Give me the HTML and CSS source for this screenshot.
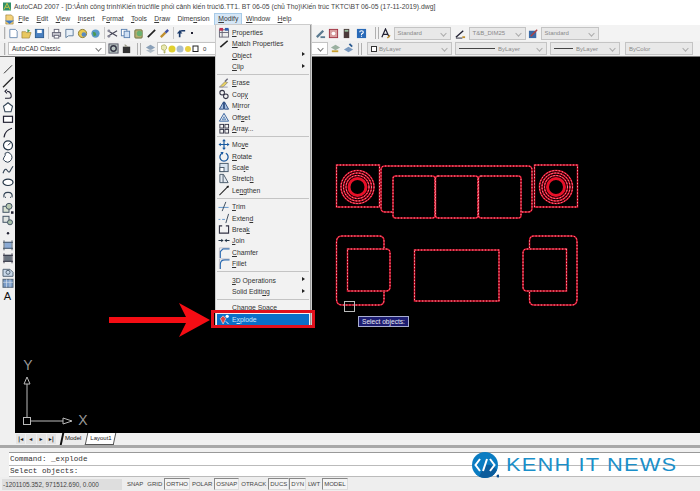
FILE: index.html
```html
<!DOCTYPE html>
<html lang="en">
<head>
    <meta charset="UTF-8">
    <meta name="viewport" content="width=device-width, initial-scale=1.0">
    <title>AutoCAD 2007</title>
    <link rel="stylesheet" href="styles.css">
</head>
<body>
<div class="app">
    <div class="titlebar">
        <svg class="app-icon" viewBox="0 0 10 10"><rect width="10" height="10" fill="#2f8f6a"/><path d="M1 9 5 1l4 8M3 6h4" stroke="#e8d040" fill="none"/></svg>
        <span>AutoCAD 2007 - [D:\Ảnh công trình\Kiến trúc\file phối cảnh kiến trúc\6.TT1. BT 06-05 (chủ Thọ)\Kiến trúc TKTC\BT 06-05 (17-11-2019).dwg]</span>
    </div>

    <div class="menubar">
        <svg class="doc-icon" viewBox="0 0 12 12"><path d="M2 1h6l2 2v8H2z" fill="#f4d27a" stroke="#8a6a20" stroke-width=".6"/><path d="M1 7l5 4 5-4" fill="#3a78c8"/></svg>
        <a><u>F</u>ile</a>
        <a><u>E</u>dit</a>
        <a><u>V</u>iew</a>
        <a><u>I</u>nsert</a>
        <a>F<u>o</u>rmat</a>
        <a><u>T</u>ools</a>
        <a><u>D</u>raw</a>
        <a>Dime<u>n</u>sion</a>
        <a class="active"><u>M</u>odify</a>
        <a><u>W</u>indow</a>
        <a><u>H</u>elp</a>
    </div>

    <div class="toolbar row-one">
        <i class="grip"></i>
        <svg class="ic" viewBox="0 0 12 12"><path d="M2 1.5h6l2 2v7H2z" fill="#fff" stroke="#6a8ab0"/></svg>
        <svg class="ic" viewBox="0 0 12 12"><path d="M1 4h4l1 1h5l-2 6H1z" fill="#e8c860" stroke="#8a7020" stroke-width=".6"/><path d="M7 1l3 2-3 2z" fill="#3a9a50"/></svg>
        <svg class="ic" viewBox="0 0 12 12"><rect x="1.5" y="1.5" width="9" height="9" fill="#4a80c0" stroke="#2a5a90"/><rect x="3.5" y="2" width="5" height="3.5" fill="#fff"/></svg>
        <i class="sep"></i>
        <svg class="ic" viewBox="0 0 12 12"><rect x="1.5" y="5" width="9" height="4" fill="#c8c8d0" stroke="#667"/><rect x="3.5" y="1.5" width="5" height="3.5" fill="#fff" stroke="#667"/><rect x="3.5" y="8" width="5" height="3" fill="#fff" stroke="#667"/></svg>
        <svg class="ic" viewBox="0 0 12 12"><path d="M2 1.5h8v7H5l-3 2z" fill="#e8f0f8" stroke="#5a7a9a"/></svg>
        <svg class="ic" viewBox="0 0 12 12"><circle cx="6" cy="6" r="4.5" fill="#e8c850" stroke="#8a7a30"/><circle cx="7.5" cy="7" r="2.5" fill="#5a8ac0"/></svg>
        <svg class="ic" viewBox="0 0 12 12"><circle cx="6" cy="6" r="4.5" fill="#5a9ac8"/><path d="M3 4l3 1 1 3-3 1z" fill="#4a9a50"/></svg>
        <i class="sep"></i>
        <svg class="ic" viewBox="0 0 12 12"><path d="M1 3l10 6M1 9l10-6" stroke="#445" stroke-width="1.2"/><circle cx="2" cy="3" r="1.5" fill="#889"/><circle cx="2" cy="9" r="1.5" fill="#889"/></svg>
        <svg class="ic" viewBox="0 0 12 12"><rect x="1.5" y="1.5" width="6" height="7" fill="#fff" stroke="#5a80b0"/><rect x="4.5" y="3.5" width="6" height="7" fill="#cfe0f4" stroke="#5a80b0"/></svg>
        <svg class="ic" viewBox="0 0 12 12"><rect x="2" y="2" width="8" height="9" rx="1" fill="#b8b070" stroke="#6a7040"/><circle cx="7" cy="6" r="3" fill="#6ab070"/></svg>
        <svg class="ic" viewBox="0 0 12 12"><path d="M2 10l8-8" stroke="#222" stroke-width="1.8"/></svg>
        <svg class="ic" viewBox="0 0 12 12"><path d="M2 10l5-5" stroke="#c09030" stroke-width="2.5"/><path d="M7 5l3-3" stroke="#4050a0" stroke-width="2.5"/></svg>
        <i class="sep"></i>
        <svg class="ic" viewBox="0 0 12 12"><path d="M4 10V5.5Q4 3 7 3h3" fill="none" stroke="#1a3a6a" stroke-width="1.8"/><path d="M1 6l3-3.5L7 6z" fill="#1a3a6a"/></svg>
        <span class="mini-dot"></span>

        <div class="row-right">
            <svg class="ic" viewBox="0 0 12 12"><path d="M2 10l7-7" stroke="#5a7a90" stroke-width="2.5"/><path d="M6 10h5" stroke="#5a7a90" stroke-width="2"/></svg>
            <svg class="ic" viewBox="0 0 12 12"><rect x="1.5" y="1.5" width="9" height="9" fill="#d8a0a0" stroke="#a03040"/><circle cx="6" cy="6" r="2" fill="#fff"/></svg>
            <svg class="ic" viewBox="0 0 12 12"><rect x="3" y="1" width="6" height="10" fill="#4a3a3a"/><rect x="4" y="2" width="4" height="2" fill="#9ac0a0"/></svg>
            <svg class="ic help" viewBox="0 0 12 12"><rect x="1" y="1" width="10" height="10" fill="#2a6ab8"/><path d="M4 4.5Q4 3 6 3t2 1.5Q8 5.5 6 6.5V7.5M6 8.500v1" fill="none" stroke="#fff" stroke-width="1.2"/></svg>
            <i class="grip double grip-styles"></i>
            <svg class="ic" viewBox="0 0 12 12"><path d="M2 10 6 1l4 9M3.5 7h5" fill="none" stroke="#223" stroke-width="1.3"/><path d="M8 11l3-3" stroke="#c09030" stroke-width="1.5"/></svg>
            <div class="combo disabled style-one">Standard</div>
            <svg class="ic" viewBox="0 0 12 12"><path d="M1 10 9 3" stroke="#223" stroke-width="1.5"/><path d="M8 10h3" stroke="#c09030" stroke-width="2"/><path d="M1 11h7" stroke="#223"/></svg>
            <div class="combo disabled style-two">T&amp;B_DIM25</div>
            <svg class="ic" viewBox="0 0 12 12"><rect x="1" y="3" width="8" height="8" fill="#3a6aa8"/><path d="M3 9l7-7" stroke="#b04040" stroke-width="1.5"/></svg>
            <div class="combo disabled style-three">Standard</div>
        </div>
    </div>

    <div class="toolbar row-two">
        <i class="grip"></i>
        <div class="combo workspace">AutoCAD Classic</div>
        <svg class="ic" viewBox="0 0 12 12"><rect x="1" y="1" width="10" height="10" fill="#b8c4c0" stroke="#556"/><circle cx="6" cy="6" r="3" fill="none" stroke="#334" stroke-width="1.5"/></svg>
        <svg class="ic" viewBox="0 0 12 12"><path d="M2 4h8v7H2z" fill="#333"/><path d="M4 4V1l4 3z" fill="#998"/></svg>
        <i class="grip double grip-layer"></i>
        <svg class="ic" viewBox="0 0 12 12"><path d="M1 5l5-3 5 3-5 3z" fill="#8aa0b8"/><path d="M1 8l5 3 5-3-5-1z" fill="#b0bcc8"/></svg>
        <div class="combo layer">
            <svg viewBox="0 0 40 10" class="layer-states"><path d="M2 1a2.5 2.5 0 1 1 2 5v3H3V6a2.5 2.5 0 0 1-1-5z" fill="#e8e8b0" stroke="#9a9a40" stroke-width=".6"/><circle cx="11" cy="5" r="3.5" fill="#e0d030"/><circle cx="19" cy="5" r="3.5" fill="#a8bcd0"/><circle cx="27" cy="5" r="3" fill="#e8d040"/><rect x="32" y="2" width="5" height="5.5" fill="#fff" stroke="#222"/></svg>
            <span>0</span>
        </div>
        <svg class="ic" viewBox="0 0 12 12"><path d="M1 5l5-3 5 3-5 3z" fill="#9ab0a0"/><path d="M2 9h7" stroke="#c8a030" stroke-width="2"/></svg>
        <svg class="ic" viewBox="0 0 12 12"><path d="M1 7l5-3 5 3-5 3z" fill="#7a9ac0"/><path d="M7 1l3 3" stroke="#2a5a90" stroke-width="2"/></svg>
        <i class="grip double grip-props"></i>
        <div class="combo disabled color"><b class="swatch"></b>ByLayer</div>
        <div class="combo disabled ltype"><b class="line"></b>ByLayer</div>
        <div class="combo disabled lweight"><b class="line short"></b>ByLayer</div>
        <div class="combo disabled plot">ByColor</div>
    </div>

    <div class="workarea">
        <div class="draw-tools">
            <svg viewBox="0 0 12 12"><path d="M2 10 10 2" stroke="#333"/></svg>
            <svg viewBox="0 0 12 12"><path d="M1 11 11 1" stroke="#222" stroke-width="1.2"/></svg>
            <svg viewBox="0 0 12 12"><path d="M3 10h4Q10 10 9 6 8 3 5 3M5 1 3 3l2 2" fill="none" stroke="#223" stroke-width="1.1"/></svg>
            <svg viewBox="0 0 12 12"><path d="M6 1.5 10.500 5 9 10.500H3L1.500 5z" fill="#fff" stroke="#345" stroke-width="1.1"/></svg>
            <svg viewBox="0 0 12 12"><rect x="1.5" y="3" width="9" height="6" fill="#fff" stroke="#223" stroke-width="1.2"/></svg>
            <svg viewBox="0 0 12 12"><path d="M2 11Q3 4 10 2" fill="none" stroke="#223" stroke-width="1.2"/></svg>
            <svg viewBox="0 0 12 12"><circle cx="6" cy="6" r="4.5" fill="#fff" stroke="#234" stroke-width="1.2"/><path d="M6 6l3-3" stroke="#234"/></svg>
            <svg viewBox="0 0 12 12"><path d="M3 2Q6 0 8 2t2 4-2 4-5 0-1-4 1-4z" fill="#fff" stroke="#345"/></svg>
            <svg viewBox="0 0 12 12"><path d="M1 9Q3 3 5 6t3 1 3-5" fill="none" stroke="#345" stroke-width="1.1"/></svg>
            <svg viewBox="0 0 12 12"><ellipse cx="6" cy="6" rx="5" ry="3.2" fill="#fff" stroke="#234" stroke-width="1.2"/></svg>
            <svg viewBox="0 0 12 12"><path d="M2 8Q1 3 6 3t4 5" fill="none" stroke="#345" stroke-width="1.2"/><path d="M3 8h1M8 8h1" stroke="#345"/></svg>
            <svg viewBox="0 0 12 12"><rect x="1" y="4" width="6" height="6" fill="#d8e0d0" stroke="#456"/><circle cx="7" cy="4" r="3" fill="#b8c8b0" stroke="#456"/><rect x="9" y="9" width="2.5" height="2.5" fill="#223"/></svg>
            <svg viewBox="0 0 12 12"><rect x="1" y="2" width="6" height="6" fill="#e0e4e0" stroke="#456"/><circle cx="8" cy="8" r="2.5" fill="#a8c0a8" stroke="#456"/></svg>
            <svg viewBox="0 0 12 12"><circle cx="6" cy="6" r="1.2" fill="#223"/></svg>
            <svg viewBox="0 0 12 12"><rect x="2.5" y="2.5" width="7" height="7" fill="#8aaad4"/><path d="M2 1v10M10 1v10M1 3h10M1 9h10" stroke="#345" stroke-width=".8"/></svg>
            <svg viewBox="0 0 12 12"><rect x="2.5" y="2.5" width="7" height="7" fill="#6a7480"/><path d="M2 1v10M10 1v10M1 3h10M1 9h10" stroke="#223" stroke-width=".8"/></svg>
            <svg viewBox="0 0 12 12"><path d="M1 4h7l3 3v4H1z" fill="#c8d8e8" stroke="#567"/><circle cx="6" cy="7" r="2" fill="none" stroke="#567"/></svg>
            <svg viewBox="0 0 12 12"><rect x="1" y="2" width="10" height="8" fill="#7a9cc8" stroke="#567"/><path d="M1 5h10M4.500 2v8M8 2v8" stroke="#e0e8f0" stroke-width=".6"/></svg>
            <span class="tool-a">A</span>
        </div>

        <div class="canvas">
            <svg class="drawing" viewBox="15 57 685 376">
                <defs>
                    <g id="furniture">
                        <rect x="336.5" y="165" width="43" height="42"/>
                        <rect x="534.5" y="165" width="43" height="42"/>
                        <path d="M392 212H385Q381 212 381 208V170Q381 166 385 166H528Q532 166 532 170V208Q532 212 528 212H521"/>
                        <rect x="393" y="176" width="42" height="42" rx="2.5"/>
                        <rect x="435.500" y="176" width="42.5" height="42" rx="2.5"/>
                        <rect x="478.500" y="176" width="42.5" height="42" rx="2.5"/>
                        <path d="M384 248V241Q384 236 379 236H342Q336.500 236 336.500 242V299Q336.500 305 342 305H379Q384 305 384 300V292"/>
                        <path d="M347.500 249H386Q390 249 390 253V287Q390 291 386 291H347.500z"/>
                        <path d="M529.500 248V241Q529.500 236 534 236H572Q577 236 577 242V299Q577 305 572 305H534Q529.500 305 529.500 300V292"/>
                        <path d="M566.500 249H527Q523 249 523 253V287Q523 291 527 291H566.500z"/>
                        <rect x="414.500" y="250" width="84.5" height="51"/>
                        <circle cx="357.500" cy="187" r="16.5"/>
                        <circle cx="357.500" cy="187" r="14"/>
                        <circle cx="357.500" cy="187" r="11.5"/>
                        <circle cx="556" cy="187" r="16.5"/>
                        <circle cx="556" cy="187" r="14"/>
                        <circle cx="556" cy="187" r="11.5"/>
                    </g>
                </defs>
                <use href="#furniture" class="line-base"/>
                <use href="#furniture" class="line-grips"/>
                <circle class="lamp-core" cx="357.5" cy="187" r="8.5"/>
                <circle class="lamp-core" cx="556" cy="187" r="8.5"/>
                <rect class="pickbox" x="344.5" y="301.5" width="10" height="10"/>
                <g class="ucs" fill="none">
                    <rect x="23.5" y="417.5" width="7" height="7"/>
                    <path d="M27 417V384M24 384l3-7 3 7zM31 421h32M63 418l9 3-9 3z"/>
                    <text x="28" y="370" text-anchor="middle">Y</text>
                    <text x="83" y="425" text-anchor="middle">X</text>
                </g>
                <path d="M109 317H186L179 303 210 320 179 337 186 323H109z" fill="#f40d14"/>
            </svg>
            <div class="hint">Select objects:</div>
        </div>
    </div>

    <div class="tabs">
        <div class="tab-nav"><b>|◂</b><b>◂</b><b>▸</b><b>▸|</b></div>
        <div class="tab active">Model</div>
        <div class="tab">Layout1</div>
    </div>

    <div class="command">
        <div class="cmd-line">Command: _explode</div>
        <div class="cmd-line">Select objects:</div>
        <div class="brand">
            <svg viewBox="0 0 28 28" class="brand-icon"><circle cx="14" cy="14" r="13" fill="#0a7cc2"/><path d="M14 14A13 13 0 0 1 26 19 13 13 0 0 1 8 25.5z" fill="#0b5c9c"/><path d="M9 8 4.5 14 9 20M19 8l4.500 6L19 20M16 8l-4 12" fill="none" stroke="#fff" stroke-width="2"/><circle cx="27" cy="25" r="1.5" fill="#0b4c8c"/></svg>
            <span>KENH IT NEWS</span>
        </div>
    </div>

    <div class="statusbar">
        <div class="coords">-1201105.352, 971512.690, 0.000</div>
        <div class="status-btn">SNAP</div>
        <div class="status-btn">GRID</div>
        <div class="status-btn on">ORTHO</div>
        <div class="status-btn">POLAR</div>
        <div class="status-btn on">OSNAP</div>
        <div class="status-btn">OTRACK</div>
        <div class="status-btn on">DUCS</div>
        <div class="status-btn on">DYN</div>
        <div class="status-btn">LWT</div>
        <div class="status-btn on">MODEL</div>
    </div>

    <div class="modify-menu">
        <div class="item"><svg viewBox="0 0 12 12"><rect x="1" y="3" width="10" height="8" fill="#eee" stroke="#667"/><path d="M1 6h10M4 3v8" stroke="#667"/><rect x="1" y="1" width="4" height="3" fill="#c03050"/><rect x="7" y="1" width="4" height="3" fill="#3060b0"/></svg><span><u>P</u>roperties</span></div>
        <div class="item"><svg viewBox="0 0 12 12"><path d="M2 10l8-7" stroke="#222" stroke-width="1.8"/></svg><span><u>M</u>atch Properties</span></div>
        <div class="item sub"><i></i><span><u>O</u>bject</span></div>
        <div class="item sub"><i></i><span><u>C</u>lip</span></div>
        <hr>
        <div class="item"><svg viewBox="0 0 12 12"><path d="M1 11l6-6 3 1-5 5z" fill="#e8d060" stroke="#667" stroke-width=".6"/><path d="M7 5l3-3" stroke="#667" stroke-width="1.5"/><path d="M1 11h9" stroke="#99a"/></svg><span><u>E</u>rase</span></div>
        <div class="item"><svg viewBox="0 0 12 12"><circle cx="4" cy="4" r="2.5" fill="none" stroke="#334" stroke-width="1.1"/><circle cx="8" cy="8" r="2.5" fill="none" stroke="#334" stroke-width="1.1"/></svg><span>Cop<u>y</u></span></div>
        <div class="item"><svg viewBox="0 0 12 12"><path d="M5.5 2 1 10h4.500zM6.500 2v8H11z" fill="#a8c0e0" stroke="#2a4a80"/></svg><span>M<u>i</u>rror</span></div>
        <div class="item"><svg viewBox="0 0 12 12"><path d="M6 1.5 11 10H1z" fill="none" stroke="#2a5a9a"/><path d="M6 5 8 8.500H4z" fill="#a8c8e8" stroke="#2a5a9a" stroke-width=".6"/></svg><span>Off<u>s</u>et</span></div>
        <div class="item"><svg viewBox="0 0 12 12"><g fill="none" stroke="#334"><rect x="1.5" y="1.5" width="4" height="4"/><rect x="7" y="1.5" width="4" height="4"/><rect x="1.5" y="7" width="4" height="4"/><rect x="7" y="7" width="4" height="4"/></g></svg><span><u>A</u>rray...</span></div>
        <hr>
        <div class="item"><svg viewBox="0 0 12 12"><path d="M6 1v10M1 6h10" stroke="#1a5aa0" stroke-width="1.3"/><path d="M6 0 4 2.500h4zM6 12 4 9.500h4zM0 6l2.500-2v4zM12 6 9.500 4v4z" fill="#1a5aa0"/></svg><span>Mo<u>v</u>e</span></div>
        <div class="item"><svg viewBox="0 0 12 12"><path d="M4 2.500A4.500 4.500 0 1 0 8 2.500" fill="none" stroke="#1a5aa0" stroke-width="1.4"/><path d="M2 1l3.500 0-1 3z" fill="#1a5aa0"/></svg><span><u>R</u>otate</span></div>
        <div class="item"><svg viewBox="0 0 12 12"><rect x="1.5" y="1.5" width="9" height="9" fill="#d8e4f0" stroke="#456"/><rect x="1.5" y="6" width="4.5" height="4.5" fill="#fff" stroke="#456"/></svg><span>Sca<u>l</u>e</span></div>
        <div class="item"><svg viewBox="0 0 12 12"><path d="M1.500 1.500h4l5 9h-9z" fill="#e4eaf0" stroke="#456"/><path d="M5 1.500v9" stroke="#456"/></svg><span>Stretc<u>h</u></span></div>
        <div class="item"><svg viewBox="0 0 12 12"><path d="M1 11 11 1" stroke="#222" stroke-width="1.1"/><rect x="9" y="1" width="2" height="2" fill="#222"/></svg><span>Le<u>n</u>gthen</span></div>
        <hr>
        <div class="item"><svg viewBox="0 0 12 12"><path d="M0 7h11" stroke="#5a90c8"/><path d="M8 1 4 11" stroke="#345"/></svg><span><u>T</u>rim</span></div>
        <div class="item"><svg viewBox="0 0 12 12"><path d="M0 7h2M4 7h3" stroke="#5a90c8"/><path d="M11 1 8 11" stroke="#345"/></svg><span>Exten<u>d</u></span></div>
        <div class="item"><svg viewBox="0 0 12 12"><path d="M4 2H1v8h10V2H8" fill="none" stroke="#334" stroke-width="1.2"/></svg><span>Brea<u>k</u></span></div>
        <div class="item"><svg viewBox="0 0 12 12"><path d="M0 6h5M7 6h5" stroke="#234" stroke-width="1.2"/><path d="M5.500 6 3 4v4zM6.500 6 9 4v4z" fill="#234"/></svg><span><u>J</u>oin</span></div>
        <div class="item"><svg viewBox="0 0 12 12"><path d="M2 12V5l3-3h7" fill="none" stroke="#2a6ab0" stroke-width="1.2"/><path d="M1 12V1h11" fill="none" stroke="#99a" stroke-width=".6"/></svg><span><u>C</u>hamfer</span></div>
        <div class="item"><svg viewBox="0 0 12 12"><path d="M2 12V7Q2 2 7 2h5" fill="none" stroke="#2a6ab0" stroke-width="1.2"/><path d="M1 12V1h11" fill="none" stroke="#99a" stroke-width=".6"/></svg><span><u>F</u>illet</span></div>
        <hr>
        <div class="item sub"><i></i><span><u>3</u>D Operations</span></div>
        <div class="item sub"><i></i><span>Solid Editi<u>n</u>g</span></div>
        <hr>
        <div class="item"><i></i><span>Change Space</span></div>
        <div class="item selected"><svg viewBox="0 0 12 12"><path d="M2 5l3-3 3 3-3 6z" fill="#e04040" stroke="#fff" stroke-width=".6"/><circle cx="9.5" cy="2.5" r="1.8" fill="#fff"/><path d="M8 8l3 3" stroke="#fff"/></svg><span>E<u>x</u>plode</span></div>
    </div>
</div>
</body>
</html>
```

FILE: styles.css
```css
* {
    margin: 0;
    padding: 0;
    box-sizing: border-box;
    font-family: "Liberation Sans", Arial, sans-serif;
}

body {
    background-color: #f0f0f0;
    overflow: hidden;
}

.app {
    position: relative;
    width: 700px;
    height: 491px;
    display: flex;
    flex-direction: column;
    overflow: hidden;
    font-size: 7px;
    color: #333;
}

.titlebar {
    height: 13px;
    background-color: #fff;
    display: flex;
    align-items: center;
    gap: 3px;
    padding-left: 3px;
    white-space: nowrap;
    font-size: 6.8px;
    color: #444;
}

.app-icon {
    width: 8px;
    height: 9px;
}

.menubar {
    height: 12px;
    background-color: #fff;
    display: flex;
    align-items: center;
    padding-left: 3.5px;
    font-size: 6.8px;
}

.doc-icon {
    width: 11px;
    height: 11px;
}

.menubar a {
    padding: 0 3.7px;
    line-height: 12px;
    color: #3a3a3a;
}

.menubar a.active {
    margin-left: 1px;
    padding: 0 4px;
    background-color: #d5e6f6;
    box-shadow: inset 0 0 0 1px #a8cbe8;
}

.toolbar {
    display: flex;
    align-items: center;
    height: 16px;
    background-color: #f3f3f3;
}

.row-two {
    background-color: #f0f0f0;
    border-bottom: 1px solid #777;
}

.grip {
    width: 2px;
    height: 12px;
    margin: 0 1px 0 4px;
    border-left: 1px solid #b0b0b0;
    border-right: 1px solid #e0e0e0;
}

.row-two > .grip:first-child {
    margin-right: 2px;
}

.grip.double {
    width: 4px;
    border-left: 1px solid #b0b0b0;
    border-right: 1px solid #b0b0b0;
}

.grip-styles {
    margin: 0 0.5px 0 6.5px;
}

.grip-layer {
    margin: 0 2.5px 0 4.5px;
}

.grip-props {
    margin: 0 5px 0 3.5px;
}

.sep {
    width: 1px;
    height: 12px;
    margin: 0 1.5px;
    background-color: #c8c8c8;
}

.ic {
    width: 11px;
    height: 11px;
    margin: 0 1px;
    flex-shrink: 0;
}

.mini-dot {
    width: 2px;
    height: 2px;
    margin-left: 3px;
    background-color: #223;
}

.row-right {
    display: flex;
    align-items: center;
    margin-left: 121px;
}

.row-right .help {
    margin-left: 3px;
}

.combo {
    position: relative;
    height: 13px;
    flex-shrink: 0;
    display: flex;
    align-items: center;
    padding-left: 3px;
    background-color: #fff;
    border: 1px solid #c4c4c4;
    font-size: 6px;
    white-space: nowrap;
}

.combo::after {
    content: "";
    position: absolute;
    right: 4px;
    top: 3px;
    width: 4px;
    height: 4px;
    border-right: 1px solid #777;
    border-bottom: 1px solid #777;
    transform: rotate(45deg) scale(0.9);
}

.combo.disabled {
    background-color: #e8e8e8;
    color: #888;
}

.combo.disabled::after {
    border-color: #aaa;
}

.workspace {
    width: 98px;
    margin-right: 0.5px;
    font-size: 6.3px;
    color: #333;
}

.style-one {
    width: 57px;
    margin: 0 3.5px 0 1.5px;
}

.style-two {
    width: 57px;
    margin: 0 1.5px;
}

.style-three {
    width: 58px;
    margin-left: 0.5px;
}

.layer {
    width: 171px;
    margin: 0 0.5px;
    gap: 2px;
}

.layer-states {
    width: 40px;
    height: 10px;
}

.color {
    width: 85px;
    color: #666;
}

.ltype {
    width: 92px;
    margin-left: 3px;
    color: #777;
}

.lweight {
    width: 70px;
    margin-left: 3px;
    color: #777;
}

.plot {
    width: 68px;
    margin-left: 5px;
}

.swatch {
    width: 6px;
    height: 6px;
    margin-right: 2px;
    background-color: #fff;
    border: 1px solid #333;
}

.line {
    width: 36px;
    height: 1px;
    margin-right: 3px;
    background-color: #444;
}

.line.short {
    width: 19px;
}

.workarea {
    height: 376px;
    display: flex;
}

.draw-tools {
    width: 15px;
    flex-shrink: 0;
    display: flex;
    flex-direction: column;
    align-items: center;
    padding-top: 6px;
    background-color: #f0f0f0;
}

.draw-tools svg {
    width: 12px;
    height: 12.6px;
}

.tool-a {
    font-size: 11px;
    line-height: 13px;
    color: #111;
}

.canvas {
    position: relative;
    flex: 1;
    background-color: #000;
}

.drawing {
    display: block;
    width: 685px;
    height: 376px;
}

.line-base {
    fill: none;
    stroke: #d80c28;
    stroke-width: 1.5;
}

.line-grips {
    fill: none;
    stroke: #ff9aa4;
    stroke-width: 1;
    stroke-dasharray: 1.3 1.9;
}

.lamp-core {
    fill: #000;
    stroke: #e81028;
    stroke-width: 3;
}

.pickbox {
    fill: none;
    stroke: #bbb;
}

.ucs {
    stroke: #bbb;
}

.ucs text {
    fill: #999;
    stroke: none;
    font-size: 14px;
}

.hint {
    position: absolute;
    left: 343px;
    top: 259px;
    width: 51px;
    height: 11px;
    line-height: 9px;
    text-align: center;
    font-size: 6.6px;
    color: #e8e8f4;
    background-color: #1c1c70;
    border: 1px solid #a8aed0;
}

.tabs {
    height: 12px;
    display: flex;
    align-items: center;
    padding-left: 16px;
    background-color: #f0f0f0;
    font-size: 6px;
}

.tab-nav {
    display: flex;
    gap: 1px;
    width: 40px;
    margin-right: 5px;
}

.tab-nav b {
    width: 9.5px;
    height: 10px;
    text-align: center;
    font-family: "DejaVu Sans", sans-serif;
    font-size: 6px;
    line-height: 10px;
    color: #111;
    background-color: #e4e4e4;
}

.tab {
    position: relative;
    height: 12px;
    line-height: 11px;
    padding: 0 4px;
    color: #222;
}

.tab::before {
    content: "";
    position: absolute;
    inset: 0;
    z-index: -1;
    background-color: #fff;
    border: 1px solid #555;
    border-top: none;
    transform: skewX(-12deg);
}

.tabs {
    position: relative;
    z-index: 0;
}

.tab.active {
    margin-right: 1px;
    color: #111;
}

.tab.active::before {
    background-color: #ececec;
    border: none;
    border-left: 2px solid #111;
}

.command {
    position: relative;
    height: 32px;
    padding: 4px 0 0 9px;
    background-color: #f0f0f0;
    border-top: 3px solid #a8a8a8;
}

.cmd-line {
    height: 11px;
    padding-left: 1px;
    line-height: 10px;
    background-color: #fff;
    border-bottom: 1px solid #bbb;
    font-family: "Liberation Mono", "Courier New", monospace;
    font-size: 7.6px;
    color: #333;
}

.cmd-line:first-of-type {
    height: 14px;
    line-height: 12px;
    border-top: 1px solid #999;
}

.brand {
    position: absolute;
    left: 471px;
    top: 3px;
    display: flex;
    align-items: center;
    gap: 7px;
}

.brand-icon {
    width: 28px;
    height: 28px;
}

.brand span {
    font-size: 19px;
    letter-spacing: 1px;
    color: #1a8fca;
    white-space: nowrap;
    transform: scaleX(1.15);
    transform-origin: left center;
}

.statusbar {
    flex: 1;
    display: flex;
    align-items: center;
    padding-left: 2px;
    background-color: #eee;
    font-size: 6px;
    color: #444;
}

.coords {
    width: 120px;
    height: 11px;
    line-height: 11px;
    padding-left: 1px;
    margin-right: 3px;
    font-size: 6.4px;
    background-color: #dedede;
}

.status-btn {
    height: 12px;
    line-height: 10px;
    padding: 0 1px;
    border: 1px solid transparent;
}

.status-btn.on {
    border-color: #888 #ddd #ddd #888;
    background-color: #f4f4f4;
}

.modify-menu {
    position: absolute;
    left: 216px;
    top: 25px;
    width: 95px;
    height: 301px;
    padding: 1.6px 1px 0;
    background-color: #f2f2f2;
    border-right: 1px solid #999;
    box-shadow: 0 0 0 1px #ccc;
    font-size: 6.8px;
    color: #333;
}

.item {
    position: relative;
    height: 11.4px;
    display: flex;
    align-items: center;
    white-space: nowrap;
}

.item svg, .item > i {
    width: 12px;
    height: 11px;
    margin: 0 2px 0 1px;
    flex-shrink: 0;
}

.item.sub::after {
    content: "";
    position: absolute;
    right: 4px;
    top: 3px;
    border-left: 3px solid #222;
    border-top: 2.5px solid transparent;
    border-bottom: 2.5px solid transparent;
}

.modify-menu hr {
    height: 5px;
    border: none;
    background: linear-gradient(#c4c4c4, #c4c4c4) center / 100% 1px no-repeat;
}

.item.selected {
    background-color: #0a6fc8;
    color: #cfe6fa;
}

.item.selected::after {
    content: "";
    position: absolute;
    left: -6px;
    right: -6px;
    top: -4px;
    bottom: -3px;
    border: 3px solid #e0101c;
}
```
